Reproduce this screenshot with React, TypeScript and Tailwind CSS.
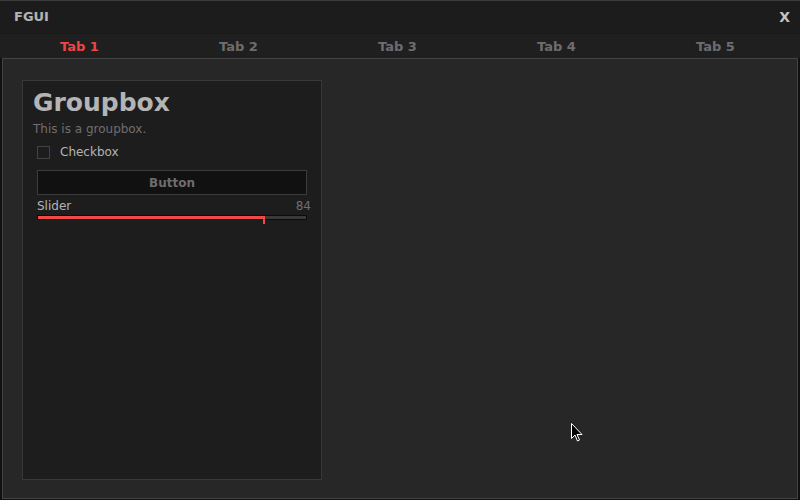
import React from 'react';

const font = { fontFamily: '"DejaVu Sans", Verdana, sans-serif' };

const tabs = ['Tab 1', 'Tab 2', 'Tab 3', 'Tab 4', 'Tab 5'];

const Cursor: React.FC = () => (
  <svg className="absolute left-[571px] top-[422px]" width="13" height="20" viewBox="0 0 13 20">
    <path d="M0.5 0.5 L0.5 15.5 L4 12 L6.5 18 L8.5 17 L6 11.5 L11 11.5 Z" fill="#000" stroke="#fff" strokeWidth="1" />
  </svg>
);

const Groupbox: React.FC = () => {
  const value = 84;
  return (
    <div className="w-[300px] h-[400px] bg-[#1e1d1e] border border-[#3a393a] px-[10px] pt-[6px] flex flex-col">
      <h1 className="text-[25px] leading-[32px] font-bold text-[#b4b4b4]">Groupbox</h1>
      <p className="text-[12px] leading-[15px] text-[#6f6e6f] mt-[3px]">This is a groupbox.</p>
      <div className="px-[4px]">
        <label className="flex items-center gap-[10px] mt-[8px] h-[14px]">
          <span className="w-[13px] h-[13px] border border-[#444344] bg-[#1e1d1e]" />
          <span className="text-[12px] text-[#b4b4b4]">Checkbox</span>
        </label>
        <button className="w-full h-[25px] mt-[11px] bg-[#121112] border border-[#3c3b3c] text-[12px] font-bold text-[#6e6d6e]">
          Button
        </button>
        <div className="flex justify-between text-[12px] leading-[14px] mt-[4px]">
          <span className="text-[#b4b4b4]">Slider</span>
          <span className="text-[#6f6e6f] -mr-[4px]">{value}</span>
        </div>
        <div className="relative mt-[2px] h-[5px] bg-[#3a393a] border border-[#0c0c0c]">
          <div className="h-full bg-[#f24848]" style={{ width: `${value}%` }} />
          <div className="absolute top-0 w-[2px] h-[8px] bg-[#f24848]" style={{ left: `${value}%` }} />
        </div>
      </div>
    </div>
  );
};

export default function App() {
  return (
    <div className="relative w-[800px] h-[500px] bg-[#121112] border-t border-[#3c3b3c] flex flex-col" style={font}>
      <div className="h-[32px] bg-[#1d1c1d] flex items-center justify-between pl-[14px] pr-[10px]">
        <span className="text-[13px] font-bold text-[#b4b4b4]">FGUI</span>
        <span className="text-[14px] font-bold text-[#c4c4c4]">X</span>
      </div>
      <div className="h-[25px] bg-[#201f20] border-t border-[#1a191a] grid grid-cols-5 pr-[5px] pt-[1px]">
        {tabs.map((t, i) => (
          <div
            key={t}
            className={`flex items-center justify-center text-[13px] font-bold ${i === 0 ? 'text-[#f04545]' : 'text-[#6e6d6e]'}`}
          >
            {t}
          </div>
        ))}
      </div>
      <div className="flex-1 mx-[2px] mb-[1px] bg-[#282728] border-t border-x border-b border-[#444344] pl-[19px] pt-[21px]">
        <Groupbox />
      </div>
      <Cursor />
    </div>
  );
}
